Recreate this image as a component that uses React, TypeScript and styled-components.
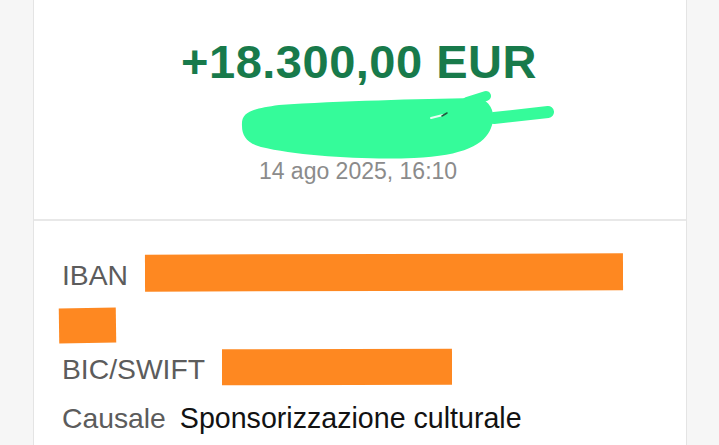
import styled, { createGlobalStyle } from "styled-components";

const GlobalStyle = createGlobalStyle`
    html, body { margin:0; padding:0; background:#f6f6f6; }
    body { font-family:"Liberation Sans", Arial, sans-serif; overflow:hidden; }
`

const Page = styled.div`
    min-height:100vh; padding:0 32px 0 33px;
`
const Card = styled.div`
    background:#fff; border-left:1.5px solid #e4e4e4; border-right:1.5px solid #e4e4e4;
    min-height:100vh;
`
const Summary = styled.section`
    height:221px; box-sizing:border-box; padding-top:38px;
    display:flex; flex-direction:column; align-items:center;
    border-bottom:2px solid #e8e8e8;
`
const Amount = styled.div`
    font-size:47px; line-height:1; font-weight:700; color:#187a4b; letter-spacing:0.5px;
    margin-left:-2px;
`
const Blob = styled.svg`
    display:block; flex:none; width:315px; height:70px; margin:5px 0 0 72px;
`
const DateText = styled.div`
    font-size:23px; line-height:1; color:#8b8b8b; margin-top:0; margin-left:-4px;
`
const Details = styled.section`
    padding:33px 0 0 28px; display:flex; flex-direction:column;
`
const Row = styled.div<{ $gap: number; $top?: number }>`
    display:flex; align-items:center; gap:${p => p.$gap}px; margin-top:${p => p.$top ?? 0}px;
`
const Label = styled.span<{ $nudge?: number }>`
    font-size:28.3px; line-height:1; color:#5c5c5c; white-space:nowrap;
    margin-top:${p => p.$nudge ?? 0}px;
`
const Value = styled.span`
    font-size:28.6px; line-height:1; color:#121212; white-space:nowrap;
`
const Redact = styled.div<{ $w: number; $h: number; $tilt?: number; $shift?: number }>`
    width:${p => p.$w}px; height:${p => p.$h}px; background:#fe8821; flex:none;
    transform:rotate(${p => p.$tilt ?? 0}deg); margin-left:${p => p.$shift ?? 0}px;
`

// hand-painted scribble over the sender name: a body plus two brush strokes
const BODY =
    "M3 36 C2 22, 12 19, 40 15 C100 11, 180 9, 235 8 C252 8, 258 24, 252 38 " +
    "C246 54, 225 66, 175 68 C125 70, 60 66, 22 57 C8 53, 3 46, 3 36 Z";

export default function App() {
    return (
        <Page>
            <GlobalStyle />
            <Card>
                <Summary>
                    <Amount>+18.300,00 EUR</Amount>
                    <Blob viewBox="0 0 315 70">
                        <g fill="none" stroke="#35fb9a" strokeLinecap="round">
                            <path d="M255 28 L309 22" strokeWidth="12" />
                            <path d="M228 12 L247 6" strokeWidth="10" />
                        </g>
                        <path d={BODY} fill="#35fb9a" />
                        <path d="M192 28 L204 25" stroke="#e8fff3" strokeWidth="2" strokeLinecap="round" />
                        <path d="M203 26 L208 23" stroke="#1f5a3d" strokeWidth="1.5" strokeLinecap="round" />
                    </Blob>
                    <DateText>14 ago 2025, 16:10</DateText>
                </Summary>
                <Details>
                    <Row $gap={17}>
                        <Label $nudge={6}>IBAN</Label>
                        <Redact $w={478} $h={37} $tilt={-0.15} />
                    </Row>
                    <Row $gap={0} $top={17}>
                        <Redact $w={57} $h={35} $tilt={-0.8} $shift={-3} />
                    </Row>
                    <Row $gap={17} $top={6}>
                        <Label $nudge={5}>BIC/SWIFT</Label>
                        <Redact $w={230} $h={36} $tilt={-0.1} />
                    </Row>
                    <Row $gap={14} $top={19}>
                        <Label>Causale</Label>
                        <Value>Sponsorizzazione culturale</Value>
                    </Row>
                </Details>
            </Card>
        </Page>
    );
}
